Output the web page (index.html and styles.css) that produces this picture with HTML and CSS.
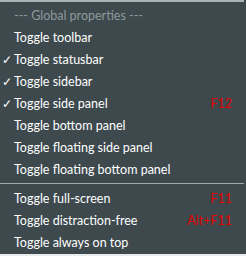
FILE: index.html
```html
<!DOCTYPE html>
<html>
<head>
<meta charset="utf-8">
<link rel="stylesheet" href="styles.css">
</head>
<body>
<div class="menu">
  <div class="topline"></div>
  <div class="header">--- Global properties ---</div>
  <div class="item"><span class="check"></span><span class="label">Toggle toolbar</span></div>
  <div class="item"><span class="check">✓</span><span class="label">Toggle statusbar</span></div>
  <div class="item"><span class="check">✓</span><span class="label">Toggle sidebar</span></div>
  <div class="item"><span class="check">✓</span><span class="label">Toggle side panel</span><span class="key">F12</span></div>
  <div class="item"><span class="check"></span><span class="label">Toggle bottom panel</span></div>
  <div class="item"><span class="check"></span><span class="label">Toggle floating side panel</span></div>
  <div class="item"><span class="check"></span><span class="label">Toggle floating bottom panel</span></div>
  <div class="sep"></div>
  <div class="item"><span class="check"></span><span class="label">Toggle full-screen</span><span class="key">F11</span></div>
  <div class="item"><span class="check"></span><span class="label">Toggle distraction-free</span><span class="key">Alt+F11</span></div>
  <div class="item"><span class="check"></span><span class="label">Toggle always on top</span></div>
</div>
</body>
</html>
```
FILE: styles.css
```css
html, body {
  margin: 0;
  padding: 0;
  background: #3d494d;
}
.menu {
  width: 246px;
  height: 256px;
  background: #3d494d;
  font-family: "Lato", "Noto Sans", sans-serif;
  font-size: 12.5px;
  color: #ffffff;
  box-sizing: border-box;
  border-bottom: 2px solid #e8ecee;
}
.topline {
  height: 2px;
  width: 244px;
  background: #a9b2b5;
}
.header {
  height: 22px;
  line-height: 22px;
  padding-left: 14px;
  color: #8e999c;
  margin-top: 3px;
}
.item {
  display: flex;
  align-items: center;
  height: 22px;
  line-height: 22px;
  padding-right: 14px;
}
.check {
  width: 14px;
  padding-left: 2px;
  box-sizing: border-box;
  font-family: "Noto Sans", sans-serif;
  font-size: 12px;
}
.label {
  flex: 1;
}
.key {
  color: #e30000;
}
.sep {
  height: 1px;
  width: 244px;
  background: #a0a9ac;
  margin: 2px 0 4px;
}
```
